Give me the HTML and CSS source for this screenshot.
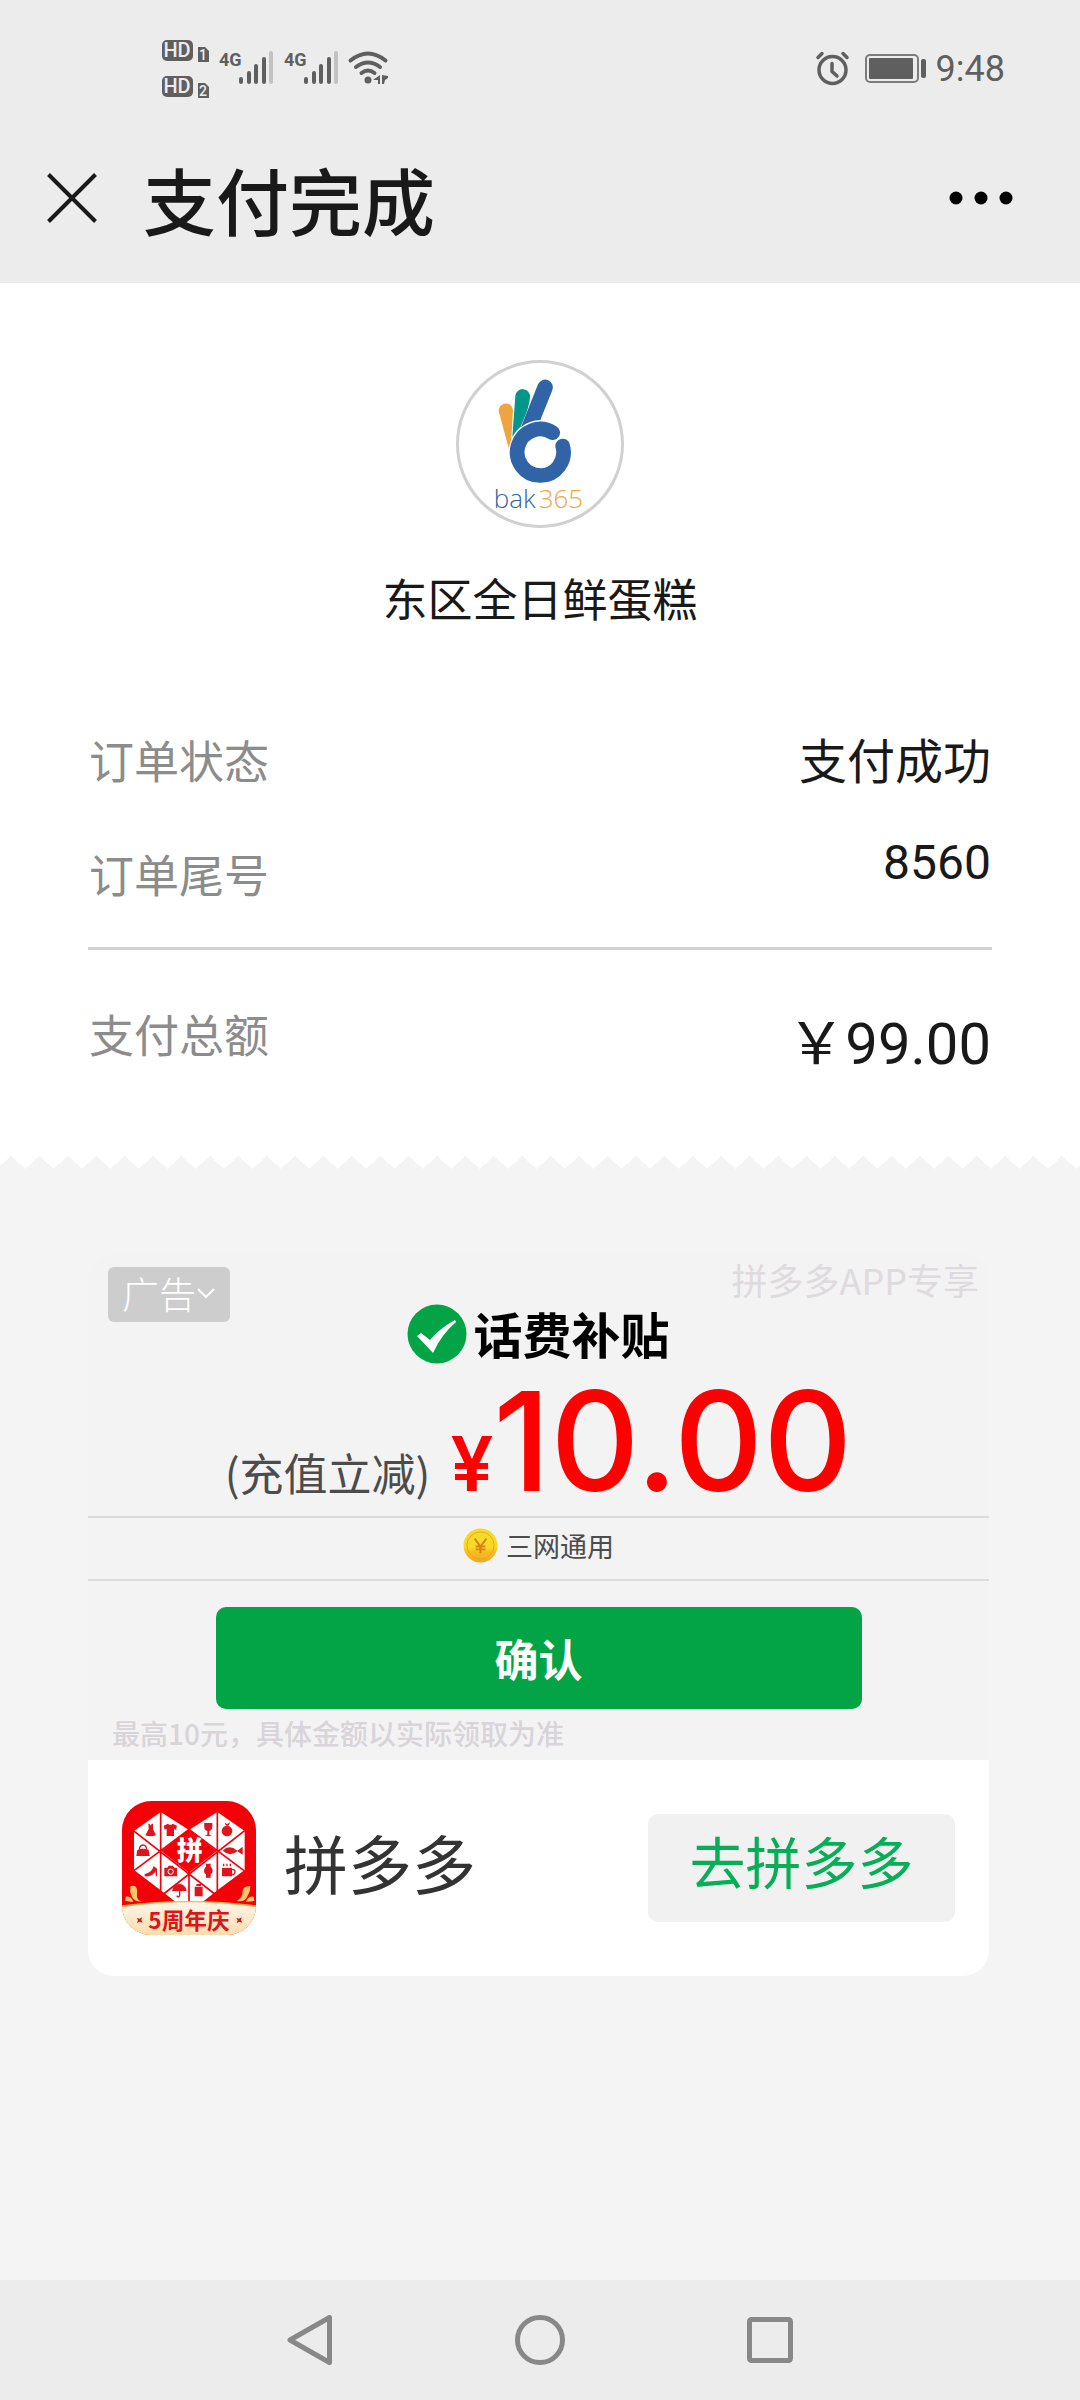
FILE: index.html
```html
<!DOCTYPE html>
<html lang="zh-CN">
<head>
  <meta charset="UTF-8">
  <meta name="viewport" content="width=device-width, initial-scale=1">
  <title>支付完成</title>
  <link rel="stylesheet" href="styles.css">
</head>
<body>

<!-- 状态栏 -->
<div class="status-bar">
  <svg class="status-left" viewBox="0 0 232 66" aria-hidden="true">
    <g fill="#5f5f5f">
      <rect x="2" y="4" width="31" height="21" rx="5"/>
      <rect x="2" y="40" width="31" height="21" rx="5"/>
      <path d="M38 11h7l4 4v11H38z"/>
      <path d="M38 47h7l4 4v11H38z"/>
    </g>
    <g class="hd-text">
      <text x="17" y="21">HD</text>
      <text x="17" y="57">HD</text>
    </g>
    <g class="sim-text">
      <text x="43" y="24">1</text>
      <text x="43" y="60">2</text>
    </g>
    <g class="net-text">
      <text x="59" y="30">4G</text>
      <text x="124" y="30">4G</text>
    </g>
    <g stroke="#5f5f5f" stroke-width="4" stroke-linecap="round">
      <path d="M81 43v3M89 37v9M96 30v16M104 23v23"/>
      <path d="M146 43v3M154 37v9M161 30v16M169 23v23"/>
      <path d="M111 17v29M176 17v29" stroke="#c2c2c2"/>
    </g>
    <g fill="none" stroke="#5f5f5f" stroke-width="4" stroke-linecap="round">
      <path d="M190.500 24.500Q208 10.500 225.500 24.500"/>
      <path d="M196 31Q208 22 220 31"/>
      <path d="M201.500 37Q208 32 214.500 37"/>
    </g>
    <g fill="#5f5f5f">
      <circle cx="208" cy="44" r="3.500"/>
      <path d="M213 44l7-5v9h-2v-4zM222 39v9h2l1-4 3-2v-2z"/>
    </g>
  </svg>
  <div class="status-right">
    <svg class="status-icons" viewBox="0 0 112 38" aria-hidden="true">
      <g fill="none" stroke="#5f5f5f" stroke-width="3.500" stroke-linecap="round" stroke-linejoin="round">
        <circle cx="17.500" cy="20" r="13.500"/>
        <path d="M17 13.500v8l5 4.500"/>
        <path d="M3 7.500l4-4M32 7.500l-4-4"/>
      </g>
      <rect x="51" y="5" width="52" height="27" rx="4" fill="none" stroke="#7c7c7c" stroke-width="2"/>
      <rect x="54" y="8" width="44" height="21" rx="1" fill="#5f5f5f"/>
      <rect x="106" y="9" width="5" height="19" rx="2" fill="#5f5f5f"/>
    </svg>
    <span class="clock">9:48</span>
  </div>
</div>

<!-- 标题栏 -->
<header class="title-bar">
  <button class="icon-btn" type="button" aria-label="关闭">
    <svg width="50" height="50" viewBox="0 0 50 50"><path d="M1.500 1.500l47 47M48.500 1.500l-47 47" stroke="#191919" stroke-width="4"/></svg>
  </button>
  <h1>支付完成</h1>
  <button class="icon-btn" type="button" aria-label="更多">
    <svg width="64" height="14" viewBox="0 0 64 14"><circle cx="7" cy="7" r="6.500"/><circle cx="32" cy="7" r="6.500"/><circle cx="57" cy="7" r="6.500"/></svg>
  </button>
</header>

<main>
  <!-- 支付结果 -->
  <section class="receipt">
    <div class="shop-logo">
      <svg viewBox="78 60 504 504" role="img" aria-label="bak365">
        <path fill="#f0a441" d="M206 213A21.500 21.500 0 0 1 249 211L244 296 236 324Z"/>
        <path fill="#03968a" d="M256 167A22 22 0 0 1 300 172C297 206 282 236 272 260Q256 272 247 291Z"/>
        <path fill="#3064a7" d="M324 133A23 23 0 0 1 367 151L331 240Q298 241 273 261Z"/>
        <path fill="none" stroke="#3064a7" stroke-width="44" stroke-linecap="round" d="M398 318A69.600 69.600 0 1 1 368 278"/>
        <text class="logo-text" x="191" y="505" fill="#3064a7">bak</text>
        <text class="logo-text" x="326" y="505" fill="#f0a441">365</text>
      </svg>
    </div>
    <h2>东区全日鲜蛋糕</h2>

    <dl class="order">
      <div class="row">
        <dt>订单状态</dt>
        <dd>支付成功</dd>
      </div>
      <div class="row tail">
        <dt>订单尾号</dt>
        <dd class="number">8560</dd>
      </div>
      <div class="row total">
        <dt>支付总额</dt>
        <dd class="number">￥99.00</dd>
      </div>
    </dl>
  </section>
  <div class="zigzag"></div>

  <!-- 广告 -->
  <section class="ad">
    <div class="ad-top">
      <button class="ad-tag" type="button">广告<svg width="20" height="12" viewBox="0 0 20 12"><path d="M2 2l8 8 8-8" fill="none" stroke="#fff" stroke-width="2"/></svg></button>
      <span class="ad-source">拼多多APP专享</span>
    </div>

    <div class="coupon-title">
      <svg width="60" height="60" viewBox="0 0 60 60" aria-hidden="true">
        <circle cx="30" cy="30" r="29.500" fill="#02a445"/>
        <path d="M10 32l4-3 9 7Q33 24 48 16l1 2Q34 31 26 49Z" fill="#fff"/>
      </svg>
      <h3>话费补贴</h3>
    </div>

    <p class="amount">
      <span class="amount-note">(充值立减)</span>
      <span class="amount-sign">¥</span><span class="amount-value">10.00</span>
    </p>

    <p class="scope">
      <svg width="35" height="35" viewBox="0 0 36 36" aria-hidden="true">
        <defs>
          <linearGradient id="coin" x1="0" y1="0" x2="0" y2="1">
            <stop offset=".55" stop-color="#f7d92a"/>
            <stop offset=".7" stop-color="#f9bd1c"/>
            <stop offset="1" stop-color="#f2a52c"/>
          </linearGradient>
        </defs>
        <circle cx="18" cy="18" r="17.500" fill="url(#coin)"/>
        <circle cx="18" cy="18" r="14" fill="none" stroke="#e6a81c"/>
        <path d="M12 11l6 8 6-8M18 19v7M13 19h10M13 22h10" fill="none" stroke="#d98212" stroke-width="2"/>
      </svg>
      三网通用
    </p>

    <button class="confirm" type="button">确认</button>
    <p class="tip">最高10元，具体金额以实际领取为准</p>

    <div class="app-row">
      <svg class="app-icon" viewBox="36 35 402 402" role="img" aria-label="拼多多5周年庆">
        <defs>
          <clipPath id="rounded"><rect x="36" y="35" width="402" height="402" rx="88"/></clipPath>
          <linearGradient id="cream" x1="0" y1="0" x2="0" y2="1">
            <stop offset="0" stop-color="#fff6ea"/>
            <stop offset="1" stop-color="#fbdcae"/>
          </linearGradient>
        </defs>
        <g clip-path="url(#rounded)">
          <rect x="36" y="35" width="402" height="402" fill="#f40009"/>
          <path fill="#fff" d="M152 68L237 122 322 68 404 125V242L322 303 275 340H200L152 303 72 242V125Z"/>
          <path fill="#f40009" d="M237 120L320 185 237 250 154 185Z"/>
          <path stroke="#f40009" stroke-width="5" d="M152 66V306M322 66V306M237 248V340M70 124L345 338M404 124L130 338M72 244L237 120M402 244L237 120"/>
          <g fill="#e0141c">
            <!-- 裙子 T恤 -->
            <path d="M115 103h4l3 6 3-6h4v16l9 19q-16 6-32 0l10-19z"/>
            <path d="M174 103q7 7 14 0l13 6-3 12-6-2v21h-22v-21l-6 2-3-12z"/>
            <!-- 酒杯 橙子 -->
            <path d="M283 101h24q2 21-9 24v11l8 4h-22l8-4v-11q-12-3-9-24z"/>
            <circle cx="351" cy="125" r="16"/>
            <path d="M344 100l7 4 10-5-6 10h-7z"/>
            <!-- 包 鱼 -->
            <path d="M82 182q17-8 34 0l3 18H79z"/>
            <path d="M88 184q0-17 11-17t11 17" fill="none" stroke="#e0141c" stroke-width="4"/>
            <path d="M338 184q20-20 44 0l16-12v24l-16-10q-22 18-44-2z"/>
            <!-- 高跟鞋 相机 -->
            <path d="M104 254q22-4 27-24l10 8v23h-4v-15q-10 18-33 15z"/>
            <path d="M163 235h9l4-6h13l4 6h8v26h-38z"/>
            <circle cx="182" cy="247" r="8" fill="none" stroke="#fff" stroke-width="3"/>
            <!-- 手表 杯子 -->
            <circle cx="295" cy="244" r="13"/>
            <path d="M288 223h14v42h-14z"/>
            <path d="M336 236h30v25h-30z"/>
            <path d="M366 240q10 0 9 8t-9 8M341 223v8M351 223v8M361 223v8" fill="none" stroke="#e0141c" stroke-width="4"/>
            <!-- 雨伞 罐子 -->
            <path d="M186 305q3-20 22-22 19 2 22 22z"/>
            <path d="M209 300v19q-4 8-9 0" fill="none" stroke="#e0141c" stroke-width="4"/>
            <path d="M254 292h24v29h-24zM259 284h14v6h-14z"/>
          </g>
          <text class="icon-char" x="239" y="213">拼</text>
          <g fill="#f9c765">
            <path d="M61 291q25-8 20 28 0 14 14 17-21 2-29-13-8-16-5-32z"/>
            <path d="M47 322q17-2 23 16l-24-3z"/>
            <path d="M421 291q-25-4-24 24-5 14-17 20 26 4 33-16 9-14 8-28z"/>
            <path d="M431 322q-17-2-23 16l25-3z"/>
          </g>
          <path fill="#f6b44a" d="M36 348Q237 322 438 348V437H36Z"/>
          <path fill="url(#cream)" d="M36 354Q237 324 438 354V437H36Z"/>
          <path fill="#dc1518" d="M80 386l8 2 8-4-2 8 4 8-9-3-8 4 3-8zM379 386l8 2 8-4-2 8 4 8-9-3-8 4 3-8z"/>
          <text class="icon-banner" x="237" y="419">5周年庆</text>
        </g>
      </svg>
      <span class="app-name">拼多多</span>
      <button class="app-open" type="button">去拼多多</button>
    </div>
  </section>
</main>

<!-- 系统导航 -->
<nav class="nav-bar">
  <button class="icon-btn" type="button" aria-label="返回">
    <svg width="50" height="50" viewBox="0 0 50 50"><path d="M44.500 2.500v45L5 25z"/></svg>
  </button>
  <button class="icon-btn" type="button" aria-label="主页">
    <svg width="50" height="50" viewBox="0 0 50 50"><circle cx="25" cy="25" r="22.500"/></svg>
  </button>
  <button class="icon-btn" type="button" aria-label="最近任务">
    <svg width="50" height="50" viewBox="0 0 50 50"><rect x="4.500" y="4.500" width="41" height="41" rx="2"/></svg>
  </button>
</nav>

</body>
</html>
```
FILE: styles.css
```css
* { box-sizing: border-box; margin: 0; padding: 0; }

body {
  display: flex;
  flex-direction: column;
  min-height: 100vh;
  background: #f4f4f4;
  color: #191919;
  font-family: "Noto Sans CJK SC", sans-serif;
}

svg { display: block; flex: none; }

button {
  border: none;
  font-family: inherit;
  cursor: pointer;
}

.icon-btn { background: none; }

/* 状态栏 */
.status-bar {
  display: flex;
  justify-content: space-between;
  padding: 36px 75px 0 160px;
  height: 140px;
  background: #ececec;
}

.status-left { width: 232px; height: 66px; }

.status-right {
  display: flex;
  align-items: center;
  gap: 9px;
  height: 66px;
}

.status-icons { width: 112px; height: 38px; }

.clock {
  color: #5f5f5f;
  font-family: Roboto, sans-serif;
  font-size: 36px;
  line-height: 40px;
}

.hd-text, .sim-text, .net-text {
  font-family: Roboto, sans-serif;
  font-weight: 500;
}

.hd-text { fill: #ececec; font-size: 20px; text-anchor: middle; }
.sim-text { fill: #ececec; font-size: 14px; text-anchor: middle; }
.net-text { fill: #5f5f5f; font-size: 18px; font-weight: 700; }

/* 标题栏 */
.title-bar {
  display: flex;
  align-items: center;
  padding: 0 67px 28px 47px;
  height: 143px;
  background: #ececec;
}

.title-bar h1 {
  flex: 1;
  margin-left: 46px;
  font-size: 73px;
  font-weight: 500;
  line-height: 100px;
}

/* 支付结果 */
main { flex: 1; }

.receipt {
  padding: 77px 88px 75px;
  background: #fff;
}

.shop-logo {
  width: 168px;
  height: 168px;
  margin: 0 auto;
  border: 3px solid #d0d0d0;
  border-radius: 50%;
}

.shop-logo svg { width: 168px; height: 168px; margin: -3px; }

.logo-text {
  font-family: "Open Sans", sans-serif;
  font-size: 78px;
  font-weight: 300;
}

.receipt h2 {
  margin-top: 40px;
  font-size: 45px;
  font-weight: 400;
  line-height: 60px;
  text-align: center;
}

.order { margin-top: 105px; }

.row {
  display: flex;
  justify-content: space-between;
  align-items: flex-start;
  padding: 0 1px;
}

.row dt {
  color: #8c8c8c;
  font-size: 45px;
  line-height: 54px;
}

.row dd {
  font-size: 48px;
  line-height: 50px;
}

.row .number {
  font-family: Roboto, "Noto Sans CJK SC", sans-serif;
  line-height: 56px;
}

.tail {
  height: 115px;
  margin-top: 48px;
  border-bottom: 3px solid #d0d0d0;
}

.tail dt { margin-top: 12px; }

.total { margin-top: 57px; }

.total .number {
  font-size: 58px;
  line-height: 74px;
}

.zigzag {
  height: 13px;
  background: conic-gradient(from -47deg at 50% 100%, #fff 94deg, transparent 0) 11px 0 / calc(100% / 38) 13px;
}

/* 广告 */
.ad {
  margin: 85px 91px 0 88px;
  background: #f3f3f3;
  border-radius: 26px;
}

.ad-top {
  display: flex;
  justify-content: space-between;
  align-items: flex-start;
  height: 50px;
  padding: 0 10px 0 20px;
}

.ad-tag {
  display: flex;
  justify-content: center;
  align-items: center;
  width: 122px;
  height: 55px;
  margin-top: 13px;
  padding-bottom: 4px;
  background: #cdcdcd;
  border-radius: 6px;
  color: #fff;
  font-size: 37px;
  font-weight: 300;
}

.ad-source {
  color: #dedade;
  font-size: 36px;
  line-height: 50px;
}

.coupon-title {
  display: flex;
  justify-content: center;
  align-items: center;
  gap: 6px;
}

.coupon-title h3 {
  padding-bottom: 2px;
  color: #000;
  font-size: 49px;
  font-weight: 700;
  line-height: 56px;
}

.amount {
  display: flex;
  justify-content: center;
  align-items: baseline;
  height: 152px;
  line-height: 154px;
}

.amount-note {
  margin-right: 20px;
  color: #4c4c4c;
  font-size: 44px;
}

.amount-sign, .amount-value {
  color: #f00;
  font-family: Inter, sans-serif;
  font-weight: 600;
}

.amount-sign { font-size: 76px; }
.amount-value { font-size: 138px; font-weight: 500; }

.scope {
  display: flex;
  justify-content: center;
  align-items: center;
  gap: 8px;
  height: 65px;
  padding-bottom: 6px;
  border-top: 2px solid #dcdcdc;
  border-bottom: 2px solid #dcdcdc;
  color: #4c4c4c;
  font-size: 27px;
}

.confirm {
  display: block;
  width: 646px;
  max-width: 80%;
  height: 102px;
  margin: 26px auto 0;
  background: #02a445;
  border-radius: 10px;
  color: #fff;
  font-size: 44px;
  font-weight: 700;
}

.tip {
  padding: 4px 24px 7px;
  color: #d8d4d9;
  font-size: 28px;
  font-weight: 500;
  line-height: 40px;
}

.app-row {
  display: flex;
  align-items: center;
  height: 216px;
  padding: 0 34px;
  background: #fff;
  border-radius: 0 0 26px 26px;
}

.app-icon { width: 134px; height: 134px; }

.app-name {
  flex: 1;
  margin-left: 28px;
  padding-bottom: 14px;
  color: #333;
  font-size: 64px;
}

.app-open {
  width: 307px;
  height: 108px;
  padding-bottom: 18px;
  background: #f1f1f1;
  border-radius: 10px;
  color: #07ae58;
  font-size: 56px;
}

.icon-char {
  fill: #fff;
  font-size: 78px;
  font-weight: 900;
  text-anchor: middle;
}

.icon-banner {
  fill: #dc1518;
  font-size: 68px;
  font-weight: 700;
  text-anchor: middle;
}

/* 系统导航 */
.nav-bar {
  display: flex;
  justify-content: center;
  align-items: center;
  gap: 180px;
  height: 120px;
  background: #ececec;
}

.nav-bar svg {
  fill: none;
  stroke: #888;
  stroke-width: 5;
  stroke-linejoin: round;
}
```
